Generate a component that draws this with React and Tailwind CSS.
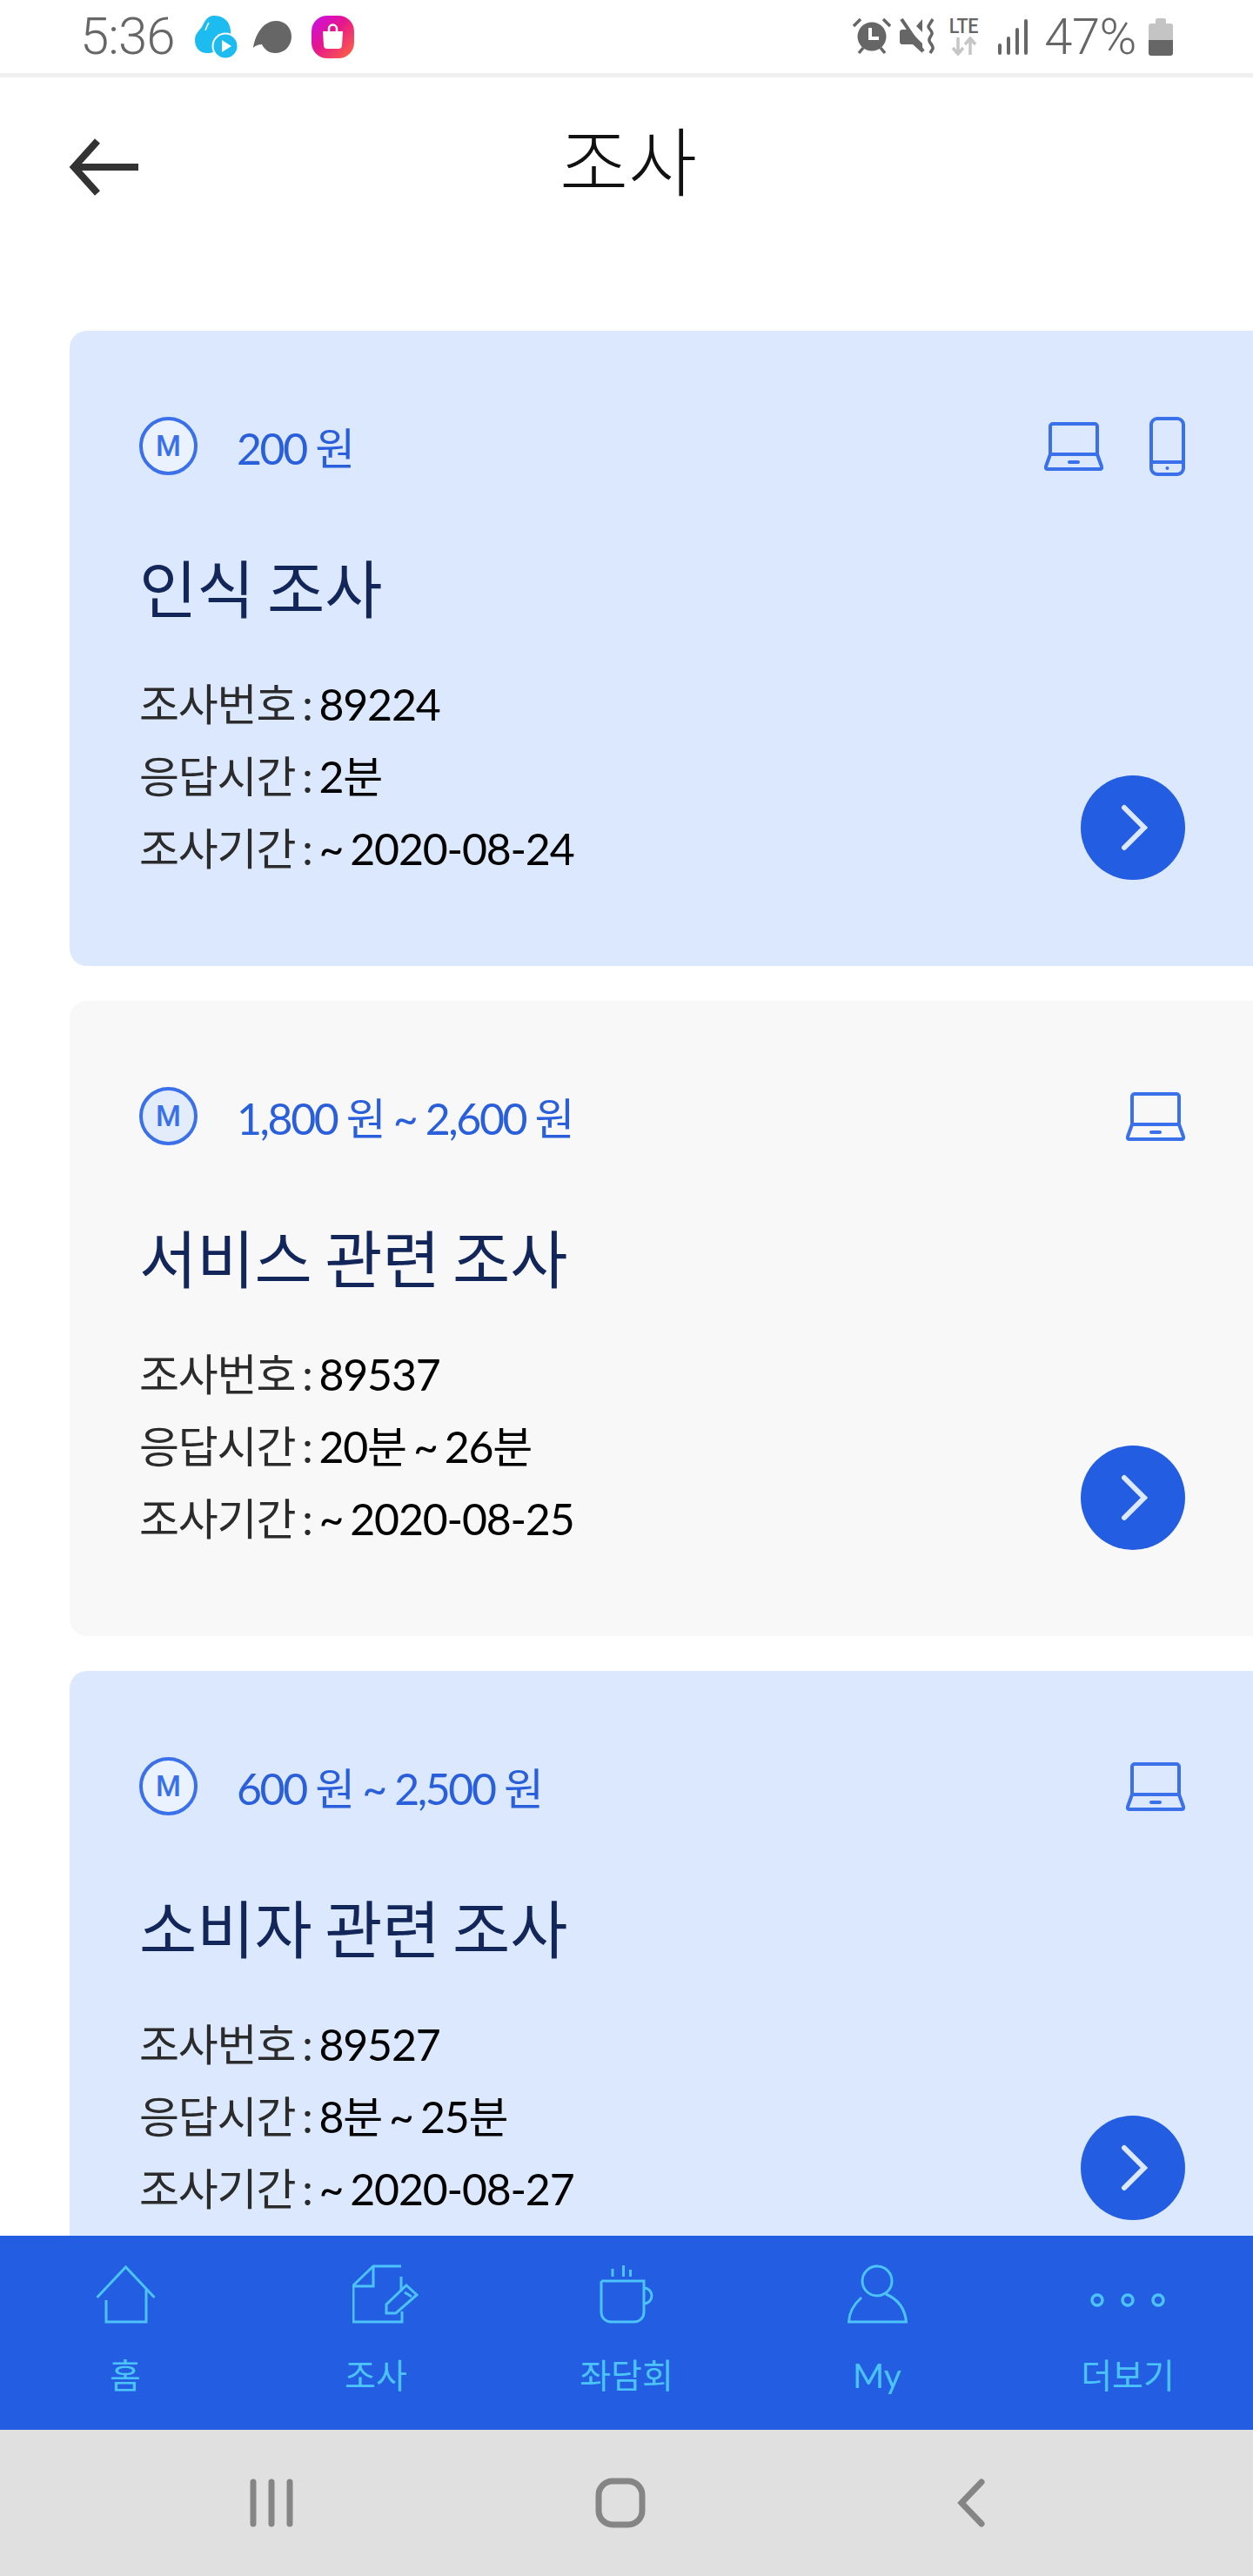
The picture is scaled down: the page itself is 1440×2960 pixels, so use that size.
const FONT = "font-['Lato','Noto_Sans_CJK_KR',sans-serif]";

const cards = [
  { bg: "bg-[#dbe8fd]", badge: "bg-[#e9f2fe]", price: "200 원", title: "인식 조사", no: "89224", time: "2분", period: "~ 2020-08-24", phone: true },
  { bg: "bg-[#f8f8f9]", badge: "bg-[#e3ecfa]", price: "1,800 원 ~ 2,600 원", title: "서비스 관련 조사", no: "89537", time: "20분 ~ 26분", period: "~ 2020-08-25" },
  { bg: "bg-[#dbe8fd]", badge: "bg-[#e9f2fe]", price: "600 원 ~ 2,500 원", title: "소비자 관련 조사", no: "89527", time: "8분 ~ 25분", period: "~ 2020-08-27" },
];

function Laptop() {
  return (
    <svg width="68" height="56" viewBox="0 0 68 56" fill="none" stroke="#3a70ea" strokeWidth="4" strokeLinejoin="round" strokeLinecap="round">
      <path d="M7 37V5a3 3 0 0 1 3-3h48a3 3 0 0 1 3 3v32" />
      <path d="M7 37h54l5 14a2 2 0 0 1-2 3H4a2 2 0 0 1-2-3z" />
      <path d="M29 46h10" strokeWidth="4" />
    </svg>
  );
}

function Phone() {
  return (
    <svg width="41" height="68" viewBox="0 0 41 68" fill="none" stroke="#3a70ea" strokeWidth="4">
      <rect x="2" y="2" width="37" height="64" rx="7" />
      <path d="M2 52h37" />
      <circle cx="20.5" cy="59" r="2" fill="#3a70ea" stroke="none" />
    </svg>
  );
}

function Row({ label, value }) {
  return (
    <div className="whitespace-nowrap">
      <span className="text-[#2b2b2b]">{label} : </span>
      <span>{value}</span>
    </div>
  );
}

function Card({ c }) {
  return (
    <div className={`${c.bg} rounded-l-[20px] ml-[80px] h-[730px] pl-[80px] pr-[78px] pt-[99px] shrink-0`}>
      <div className="flex items-center justify-between h-[67px]">
        <div className="flex items-center gap-[45px]">
          <div className={`${c.badge} w-[67px] h-[67px] rounded-full border-[4px] border-[#3a70ea] flex items-center justify-center font-['Roboto',sans-serif] font-medium text-[33px] text-[#3a70ea]`}>M</div>
          <div className="text-[50px] tracking-[-2.4px] text-[#2a5fdc] leading-none mt-[5px]">{c.price}</div>
        </div>
        <div className="flex items-center gap-[53px]">
          <Laptop />
          {c.phone && <Phone />}
        </div>
      </div>
      <div className="mt-[88px] text-[72px] leading-[84px] [word-spacing:-4px] text-[#12265a]">{c.title}</div>
      <div className="flex justify-between items-start mt-[50px]">
        <div className="text-[50px] leading-[83px] tracking-[-1.2px] [word-spacing:-3.6px] text-black">
          <Row label="조사번호" value={c.no} />
          <Row label="응답시간" value={c.time} />
          <Row label="조사기간" value={c.period} />
        </div>
        <div className="mt-[123px] w-[120px] h-[120px] rounded-full bg-[#225de2] flex items-center justify-center">
          <svg width="32" height="54" viewBox="0 0 32 54" fill="none" stroke="#dbe8fd" strokeWidth="6" strokeLinecap="round" strokeLinejoin="miter" className="ml-[4px]">
            <path d="M4 4l23 23L4 50" />
          </svg>
        </div>
      </div>
    </div>
  );
}

const nav = [
  {
    label: "홈",
    icon: (
      <svg width="69" height="68" viewBox="110 2601 69 68" fill="none" stroke="#4cc3fa" strokeWidth="3">
        <path d="M111.5 2639L144.5 2604L177.500 2639" />
        <path d="M122 2642V2667H168V2630" />
      </svg>
    ),
  },
  {
    label: "조사",
    icon: (
      <svg width="76" height="68" viewBox="403 2601 76 68" fill="none" stroke="#4cc3fa" strokeWidth="3" className="ml-[22px]">
        <path d="M459 2603H427L404 2625V2667H460V2655" />
        <path d="M427 2603V2626H404" />
        <path d="M459 2615V2632" />
        <path d="M465 2625L477 2636L453 2657H442V2647Z" />
        <path d="M463 2633L471 2638" />
      </svg>
    ),
  },
  {
    label: "좌담회",
    icon: (
      <svg width="62" height="68" viewBox="690 2601 62 68" fill="none" stroke="#4cc3fa" strokeWidth="3">
        <path d="M692 2620H741V2656a11 11 0 0 1-11 11H703a11 11 0 0 1-11-11V2620" />
        <path d="M741 2628a9 9 0 0 1 0 18" />
        <path d="M705 2606V2615M717.500 2602V2615M725.500 2607V2615" />
      </svg>
    ),
  },
  {
    label: "My",
    icon: (
      <svg width="69" height="68" viewBox="974 2601 69 68" fill="none" stroke="#4cc3fa" strokeWidth="3">
        <ellipse cx="1008" cy="2620" rx="17" ry="17" />
        <path d="M990 2639C981 2647 976 2656 975.500 2667H1041.500C1040 2652 1032 2641 1018 2635" />
      </svg>
    ),
  },
  {
    label: "더보기",
    icon: (
      <svg width="88" height="68" viewBox="1252 2601 88 68" fill="none" stroke="#4cc3fa" strokeWidth="3.500">
        <circle cx="1261" cy="2642" r="6" />
        <circle cx="1296" cy="2642" r="6" />
        <circle cx="1331" cy="2642" r="6" />
      </svg>
    ),
  },
];

function StatusLeft() {
  return (
    <div className="flex items-center ml-[92px]">
      <div className="font-['Roboto',sans-serif] font-light text-[60px] leading-none text-[#666666] tracking-[-1px]">5:36</div>
      <svg width="49" height="49" viewBox="224 17 49 49" className="ml-[24px]">
        <path d="M246 17C256 17 266 23 265 38L262 56L240 60C230 61 224 54 224 45C224 38 229 34 232 30C235 24 238 17 246 17Z" fill="#1cbbf0" />
        <path d="M240 25C238 28 237 31 236 34" stroke="#fff" strokeWidth="1.500" fill="none" />
        <circle cx="259" cy="52" r="15.500" fill="#fff" />
        <circle cx="259" cy="52" r="13.500" fill="#1cbbf0" />
        <path d="M255 45L266 52L255 59Z" fill="#fff" />
      </svg>
      <svg width="44" height="37" viewBox="291 21 44 37" className="ml-[18px]">
        <path d="M291 52C293 38 302 21 317 21C328 21 335 29 335 39C335 50 327 58 316 58C309 58 304 54 301 48C297 48 294 49 291 52Z" fill="#666666" />
      </svg>
      <svg width="49" height="49" viewBox="358 17 49 49" className="ml-[23px]">
        <defs>
          <linearGradient id="shop" x1="0" y1="0" x2="1" y2="1">
            <stop offset="0" stopColor="#c80ff0" />
            <stop offset="0.45" stopColor="#e6168c" />
            <stop offset="1" stopColor="#ff6a3c" />
          </linearGradient>
        </defs>
        <rect x="358" y="17" width="49" height="49" rx="18" fill="url(#shop)" />
        <path d="M371 35H394L393 51a4 4 0 0 1-4 4H376a4 4 0 0 1-4-4Z" fill="#fff" />
        <path d="M378 35V32a4.500 4.500 0 0 1 9 0V35" fill="none" stroke="#fff" strokeWidth="2.500" />
      </svg>
    </div>
  );
}

function StatusRight() {
  return (
    <div className="flex items-center mr-[92px]">
      <svg width="45" height="42" viewBox="978 20 45 42">
        <circle cx="1001" cy="41" r="16.500" fill="#666666" />
        <path d="M980 29L988 21M1022 29L1014 21M986 60L991 54M1016 60L1011 54" stroke="#666666" strokeWidth="3.500" />
        <path d="M999 31V43H1009" fill="none" stroke="#fff" strokeWidth="4" />
      </svg>
      <svg width="42" height="42" viewBox="1032 20 42 42" className="ml-[9px]">
        <path d="M1033 36A3 3 0 0 1 1036 33H1043L1059 49V60L1048 50H1036A3 3 0 0 1 1033 47Z" fill="#666666" />
        <path d="M1035 21L1060 58" stroke="#666666" strokeWidth="4" />
        <path d="M1059 21V36L1052 29Z" fill="#666666" />
        <path d="M1071 21L1066 29C1065 31 1071 35 1070 38C1069 41 1066 43 1067 46C1068 49 1072 52 1071 55L1068 60" fill="none" stroke="#666666" strokeWidth="3.500" />
      </svg>
      <div className="ml-[12px] w-[41px] h-[44px] flex flex-col items-center">
        <div className="font-['Roboto',sans-serif] font-medium text-[24px] leading-[20px] text-[#666666] tracking-[-0.5px] scale-x-90">LTE</div>
        <svg width="30" height="22" viewBox="0 0 30 22" fill="none" stroke="#c6c6c6" strokeWidth="3.500" className="mt-[2px]">
          <path d="M8 1V20M2 13L8 20L14 13" />
          <path d="M22 21V2M16 9L22 2L28 9" />
        </svg>
      </div>
      <svg width="36" height="41" viewBox="0 0 36 41" fill="none" stroke="#666666" strokeWidth="4" strokeLinecap="round" className="ml-[18px]">
        <path d="M3 30V39M13 22V39M23 12V39M33 2V39" />
      </svg>
      <div className="ml-[18px] font-['Roboto',sans-serif] font-light text-[58px] leading-none text-[#666666] tracking-[-0.5px]">47%</div>
      <div className="ml-[14px] w-[28px] h-[43px] flex flex-col items-center">
        <div className="w-[12px] h-[6px] bg-[#c4c4c4] rounded-t-[2px]" />
        <div className="w-[28px] h-[19px] bg-[#c4c4c4] rounded-t-[3px]" />
        <div className="w-[28px] h-[18px] bg-[#666666] rounded-b-[3px]" />
      </div>
    </div>
  );
}

export default function App() {
  return (
    <div className={`${FONT} w-[1440px] h-[2960px] bg-white flex flex-col overflow-hidden`}>
      <div className="h-[84px] flex items-center justify-between shrink-0">
        <StatusLeft />
        <StatusRight />
      </div>
      <div className="h-[5px] bg-[#f0f0f0] shrink-0" />
      <div className="h-[291px] shrink-0 grid grid-cols-[1fr_auto_1fr] items-start pt-[70px]">
        <svg width="80" height="66" viewBox="0 0 80 66" fill="none" stroke="#333333" strokeWidth="8" className="ml-[79px]">
          <path d="M80 33H6" />
          <path d="M33 3L6 33L33 63" />
        </svg>
        <div className="text-[86px] leading-[80px] text-[#111111] font-light -mt-[13px] ml-[4px]">조사</div>
        <div />
      </div>
      <div className="flex-1 min-h-0 flex flex-col gap-[40px] overflow-hidden">
        {cards.map((c) => (
          <Card key={c.no} c={c} />
        ))}
      </div>
      <div className="h-[223px] bg-[#225de2] shrink-0 grid grid-cols-5 pt-[33px]">
        {nav.map((n) => (
          <div key={n.label} className="flex flex-col items-center">
            <div className="h-[68px] flex items-center justify-center">{n.icon}</div>
            <div className="mt-[35px] text-[39px] leading-[48px] text-[#4cc3fa]">{n.label}</div>
          </div>
        ))}
      </div>
      <div className="h-[168px] bg-[#e0e0e0] shrink-0 flex items-center pl-[285px]">
        <svg width="54" height="56" viewBox="0 0 54 56" fill="none" stroke="#858585" strokeWidth="7" strokeLinecap="round">
          <path d="M6 4V52M27 4V52M48 4V52" />
        </svg>
        <svg width="58" height="58" viewBox="0 0 58 58" fill="none" stroke="#858585" strokeWidth="7" className="ml-[345px]">
          <rect x="4" y="4" width="50" height="50" rx="16" />
        </svg>
        <svg width="32" height="56" viewBox="0 0 32 56" fill="none" stroke="#858585" strokeWidth="7" strokeLinecap="round" className="ml-[358px]">
          <path d="M28 4L5 28L28 52" />
        </svg>
      </div>
    </div>
  );
}
